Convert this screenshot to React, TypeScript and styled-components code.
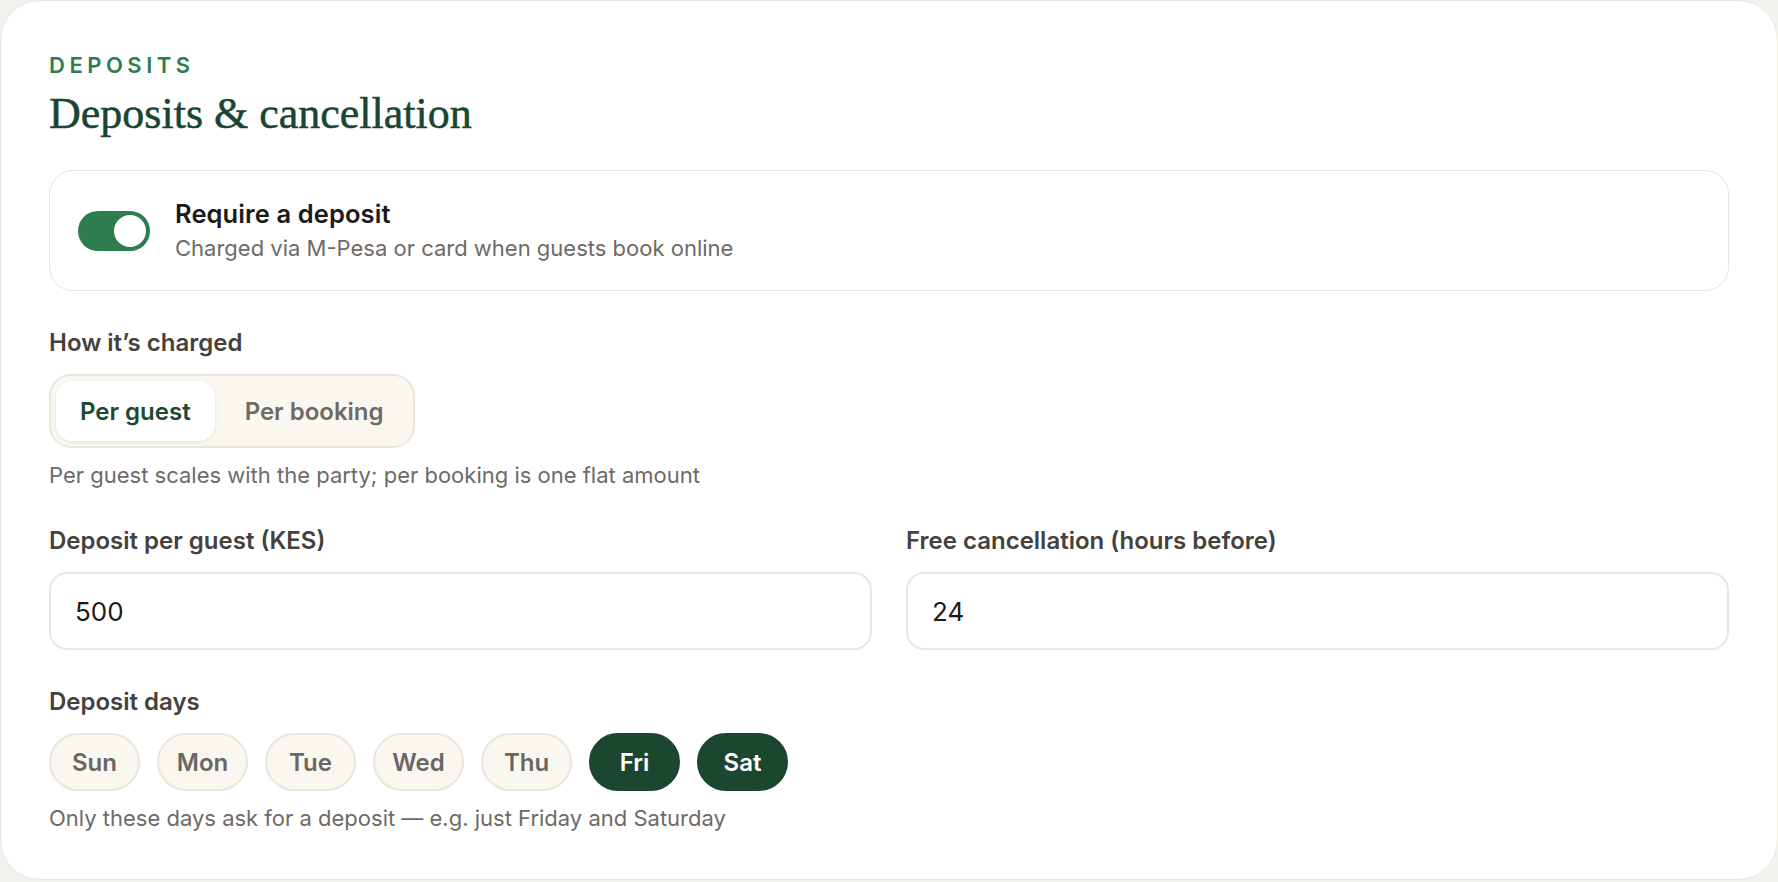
import React, { useState } from "react";
import styled, { createGlobalStyle } from "styled-components";

const GlobalStyle = createGlobalStyle`
  * { box-sizing: border-box; }
  html, body { margin: 0; padding: 0; }
  body {
    background: #f3f1ec;
    font-family: "Inter", "Noto Sans", sans-serif;
    -webkit-font-smoothing: antialiased;
  }
`;

const Card = styled.section`
  background: #ffffff;
  border: 1px solid #ebe7df;
  border-radius: 40px;
  padding: 51px 48px 47px;
  display: flex;
  flex-direction: column;
`;

const Eyebrow = styled.div`
  font-size: 22px;
  line-height: 26px;
  font-weight: 600;
  letter-spacing: 0.205em;
  color: #2e7d4f;
  text-transform: uppercase;
`;

const Title = styled.h2`
  margin: 10px 0 0;
  font-family: "Liberation Serif", "Times New Roman", serif;
  font-size: 44px;
  line-height: 52px;
  font-weight: 400;
  color: #1a4530;
  -webkit-text-stroke: 0.5px #1a4530;
`;

const Sections = styled.div`
  margin-top: 30px;
  display: flex;
  flex-direction: column;
  gap: 38px;
`;

const ToggleCard = styled.div`
  display: flex;
  align-items: center;
  gap: 25px;
  padding: 28px;
  border: 1px solid #e9e5dc;
  border-radius: 24px;
`;

const Track = styled.button<{ $on: boolean }>`
  position: relative;
  width: 72px;
  height: 40px;
  flex: none;
  border: none;
  border-radius: 20px;
  padding: 0;
  cursor: pointer;
  background: ${(p) => (p.$on ? "#2e7d4f" : "#d9d4ca")};
`;

const Knob = styled.span<{ $on: boolean }>`
  position: absolute;
  top: 4px;
  left: ${(p) => (p.$on ? "36px" : "4px")};
  width: 32px;
  height: 32px;
  border-radius: 50%;
  background: #ffffff;
`;

const ToggleText = styled.div`
  display: flex;
  flex-direction: column;
  gap: 5px;
`;

const ToggleTitle = styled.div`
  font-size: 25.5px;
  line-height: 30px;
  font-weight: 600;
  letter-spacing: 0.1px;
  color: #1c1a18;
`;

const ToggleSub = styled.div`
  font-size: 22px;
  line-height: 28px;
  color: #6e6a66;
`;

const Field = styled.div`
  display: flex;
  flex-direction: column;
  align-items: flex-start;
  min-width: 0;
`;

const Label = styled.div`
  font-size: 24px;
  line-height: 28px;
  font-weight: 600;
  color: #45413c;
  margin-bottom: 17px;
`;

const Helper = styled.div`
  margin-top: 13px;
  font-size: 22px;
  line-height: 28px;
  color: #6e6a66;
`;

const Segmented = styled.div`
  display: flex;
  gap: 6px;
  padding: 5px;
  border: 2px solid #ebe6dc;
  border-radius: 22px;
  background: #faf7f1;
`;

const SegButton = styled.button<{ $active: boolean }>`
  height: 60px;
  padding: 0 24px;
  border: none;
  border-radius: 16px;
  font-family: inherit;
  font-size: 24px;
  font-weight: 600;
  cursor: pointer;
  background: ${(p) => (p.$active ? "#ffffff" : "transparent")};
  color: ${(p) => (p.$active ? "#1b4a32" : "#6e6a66")};
  box-shadow: ${(p) => (p.$active ? "0 1px 3px rgba(60, 50, 30, 0.12)" : "none")};
`;

const TwoCols = styled.div`
  display: grid;
  grid-template-columns: 1fr 1fr;
  gap: 34px;
`;

const Input = styled.input`
  width: 100%;
  height: 78px;
  padding: 0 24px;
  border: 2px solid #ebe7df;
  border-radius: 18px;
  font-family: inherit;
  font-size: 26px;
  color: #1c1a18;
  background: #ffffff;
  outline: none;
`;

const Days = styled.div`
  display: flex;
  gap: 17px;
`;

const DayChip = styled.button<{ $active: boolean }>`
  width: 91px;
  height: 58px;
  border-radius: 29px;
  font-family: inherit;
  font-size: 24px;
  font-weight: 600;
  cursor: pointer;
  border: 2px solid ${(p) => (p.$active ? "#1b4731" : "#ebe6dc")};
  background: ${(p) => (p.$active ? "#1b4731" : "#faf7f1")};
  color: ${(p) => (p.$active ? "#ffffff" : "#6b6662")};
`;

const DAYS = ["Sun", "Mon", "Tue", "Wed", "Thu", "Fri", "Sat"];

export default function App() {
  const [on, setOn] = useState(true);
  const [mode, setMode] = useState<"guest" | "booking">("guest");
  const [deposit, setDeposit] = useState("500");
  const [hours, setHours] = useState("24");
  const [days, setDays] = useState<string[]>(["Fri", "Sat"]);

  const toggleDay = (d: string) =>
    setDays((cur) => (cur.includes(d) ? cur.filter((x) => x !== d) : [...cur, d]));

  return (
    <>
      <GlobalStyle />
      <Card>
        <Eyebrow>Deposits</Eyebrow>
        <Title>Deposits &amp; cancellation</Title>
        <Sections>
          <ToggleCard>
            <Track $on={on} onClick={() => setOn(!on)} aria-label="Require a deposit">
              <Knob $on={on} />
            </Track>
            <ToggleText>
              <ToggleTitle>Require a deposit</ToggleTitle>
              <ToggleSub>Charged via M-Pesa or card when guests book online</ToggleSub>
            </ToggleText>
          </ToggleCard>

          <Field>
            <Label>How it’s charged</Label>
            <Segmented>
              <SegButton $active={mode === "guest"} onClick={() => setMode("guest")}>
                Per guest
              </SegButton>
              <SegButton $active={mode === "booking"} onClick={() => setMode("booking")}>
                Per booking
              </SegButton>
            </Segmented>
            <Helper>Per guest scales with the party; per booking is one flat amount</Helper>
          </Field>

          <TwoCols>
            <Field>
              <Label>Deposit per guest (KES)</Label>
              <Input value={deposit} onChange={(e) => setDeposit(e.target.value)} />
            </Field>
            <Field>
              <Label>Free cancellation (hours before)</Label>
              <Input value={hours} onChange={(e) => setHours(e.target.value)} />
            </Field>
          </TwoCols>

          <Field>
            <Label>Deposit days</Label>
            <Days>
              {DAYS.map((d) => (
                <DayChip key={d} $active={days.includes(d)} onClick={() => toggleDay(d)}>
                  {d}
                </DayChip>
              ))}
            </Days>
            <Helper>Only these days ask for a deposit — e.g. just Friday and Saturday</Helper>
          </Field>
        </Sections>
      </Card>
    </>
  );
}
